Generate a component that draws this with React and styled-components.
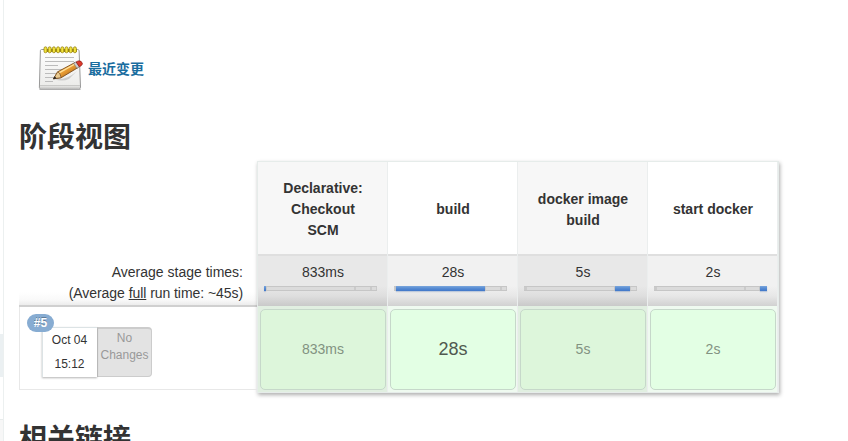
import React from 'react';
import styled, { createGlobalStyle, css } from 'styled-components';

const GlobalStyle = createGlobalStyle`
  * { box-sizing: border-box; }
  body {
    margin: 0;
    overflow: hidden;
    background: #fff;
    color: #333;
    font-family: "Liberation Sans", "Noto Sans CJK SC", sans-serif;
    font-size: 14px;
    line-height: 21px;
  }
`;

const Page = styled.div`
  display: flex;
  width: 848px;
  height: 441px;
  overflow: hidden;
`;

const Rail = styled.aside`
  display: flex;
  flex-direction: column;
  width: 4px;
  flex: none;
  border-right: 1px solid #ecf0f0;
`;

const RailSpace = styled.div`
  height: ${(p) => p.$height}px;
`;

const RailActive = styled.div`
  height: 43px;
  background: #ebf0f2;
`;

const RailFoot = styled.div`
  flex: 1;
  background: #f7f7f7;
  border-top: 1px solid #e8ecec;
`;

const Main = styled.main`
  flex: 1;
  padding: 44px 0 0 15px;
`;

const ChangesLink = styled.a`
  display: flex;
  align-items: center;
  height: 48px;
  padding-left: 17px;
  color: #1a6d9f;
  font-weight: 700;
  font-family: "Noto Sans CJK SC", sans-serif;
  svg { flex: none; margin-right: 4px; }
  span { margin-top: 1px; }
`;

const Title = styled.h2`
  margin: 0;
  padding-top: ${(p) => p.$top}px;
  font: 700 28px/40px "Noto Sans CJK SC", sans-serif;
  color: #333;
`;

const StageView = styled.section`
  display: flex;
  align-items: flex-start;
  height: 232px;
  margin-top: 6px;
`;

const Legend = styled.div`
  width: 238px;
  padding-top: 93px;
`;

const AverageLabel = styled.div`
  height: 53px;
  padding: 8px 14px 0 0;
  text-align: right;
  white-space: nowrap;
  border-bottom: 2px solid #d0d0d0;
  background: linear-gradient(#fff 75%, #f9f9f9 90%, #ececec);
`;

const FullRun = styled.div`
  letter-spacing: -0.06px;
`;

const RunInfo = styled.div`
  position: relative;
  height: 83px;
  padding: 20px 0 0 22px;
  display: flex;
  align-items: flex-start;
  border: solid #e8e8e8;
  border-width: 0 0 1px 1px;
`;

const Badge = styled.span`
  position: absolute;
  z-index: 2;
  left: 7px;
  top: 7px;
  width: 27px;
  height: 18px;
  border-radius: 9px;
  background: #87acd2;
  color: #fff;
  font-size: 12px;
  font-weight: 700;
  line-height: 18px;
  text-align: center;
  text-shadow: 0 -1px 0 rgba(0, 0, 0, 0.3);
`;

const RunDate = styled.div`
  width: 55px;
  height: 50px;
  padding-right: 1px;
  text-align: center;
  font-size: 12px;
  line-height: 24px;
  background: #fff;
  border: solid #dce3e5;
  border-width: 1px 0 0 1px;
  box-shadow: 0 1px 2px rgba(0, 0, 0, 0.3);
  z-index: 1;
`;

const NoChanges = styled.div`
  width: 55px;
  height: 50px;
  padding-top: 1px;
  text-align: center;
  font-size: 12px;
  line-height: 17px;
  color: #999;
  background: #e3e3e3;
  border: 1px solid #ccc;
  border-top-width: 2px;
  border-radius: 0 4px 4px 0;
`;

const Grid = styled.div`
  display: grid;
  grid-template-columns: repeat(4, 130px);
  width: 522px;
  height: 232px;
  border: 1px solid #e6ecea;
  box-shadow: 1px 2px 4px rgba(0, 0, 0, 0.32);
`;

const Stage = styled.div`
  background: ${(p) => (p.$odd ? '#f7f7f7' : '#fff')};
  border-right: 1px solid #ebeeee;
`;

const StageName = styled.div`
  height: 94px;
  display: flex;
  align-items: center;
  justify-content: center;
  padding: 3px 17px 0 18px;
  text-align: center;
  font-weight: 700;
  border-bottom: 2px solid #dfdfdf;
`;

const StageAverage = styled.div`
  height: 50px;
  padding: 6px 8px 0 6px;
  text-align: center;
  background: ${(p) =>
    p.$odd
      ? 'linear-gradient(#e8e8e8 60%, #dedede 80%, #c9c9c9)'
      : 'linear-gradient(#f1f1f1 60%, #e7e7e7 80%, #d1d1d1)'};
`;

const AverageText = styled.div`
  padding-left: 3px;
`;

const Bar = styled.div`
  display: flex;
  width: 113px;
  height: 5px;
  margin-top: 3px;
`;

const segmentFill = css`
  background: linear-gradient(#7ba6dc, #5b8fd4 40%, #4077c9);
  box-shadow: 0 1px 1px rgba(50, 100, 170, 0.25);
`;

const segmentTrack = css`
  background: #dbdbdb;
  border: solid #c6c6c6;
  border-width: 1px 0;
  box-shadow: inset 1px 0 #cacaca, inset -1px 0 #cacaca;
`;

const Segment = styled.i`
  height: 5px;
  width: ${(p) => p.$size}px;
  flex: none;
  ${(p) => (p.$filled ? segmentFill : segmentTrack)}
`;

const RunCell = styled.div`
  height: 86px;
  padding: 3px 1px 2px 2px;
  background: ${(p) => (p.$odd ? '#e1efe1' : '#effaf0')};
`;

const RunResult = styled.div`
  height: 81px;
  padding-bottom: 1px;
  display: flex;
  align-items: center;
  justify-content: center;
  border: 1px solid #c6d8ca;
  border-radius: 5px;
  background: ${(p) => (p.$odd ? '#ddf6db' : '#e3ffe4')};
  color: ${(p) => (p.$main ? '#50594f' : '#829281')};
  font-size: ${(p) => (p.$main ? 18 : 14)}px;
`;

const Pad = () => (
  <svg width="48" height="48" viewBox="0 0 48 48">
    <defs>
      <linearGradient id="paper" x2="0" y2="1">
        <stop stopColor="#fff" />
        <stop offset="1" stopColor="#eaeae8" />
      </linearGradient>
      <linearGradient id="wood" x2="1" y2="1">
        <stop stopColor="#ffdc83" />
        <stop offset=".5" stopColor="#e89b32" />
        <stop offset="1" stopColor="#8b4d10" />
      </linearGradient>
    </defs>
    <path d="M4 44.5h40l1 1.2H3z" fill="#ababab" />
    <path d="M5.5 5.5h36c1 0 1.5.5 1.6 1.5l1.4 36c0 1.2-.5 2-1.7 2H5c-1.2 0-1.7-.8-1.6-2l1-36c0-1 .3-1.500 1.1-1.500z" fill="url(#paper)" stroke="#999" />
    <path d="M4 41.500h40M4 43.200h40" stroke="#c9c9c7" />
    <path d="M9 13.500h29M9 17.500h29M9 21.500h13M9 25.500h22M9 29.500h16M9 33.500h9M9 37.500h8" stroke="#bcbcbc" />
    <path d="M8 5h33v3H8z" fill="#a18d12" />
    {[8, 12.2, 16.4, 20.6, 24.8, 29, 33.2, 37.4].map((x) => (
      <rect key={x} x={x} y="2.800" width="3" height="6" rx="1.500" fill="#f3e33c" stroke="#8d7808" strokeWidth=".7" />
    ))}
    <path d="M18 35q12 2 23-8l-8 8q-7 3-15 0z" fill="#999" opacity=".4" />
    <path d="M17.500 34.800l4.200-7 17.300-9.300 3.200 5-17 10.200z" fill="url(#wood)" stroke="#704315" strokeWidth=".8" />
    <path d="M23 28.800l16-8.800" stroke="#ffe19a" strokeWidth="1.400" />
    <path d="M17.500 34.800l4.200-7q2.500.5 3.500 5.900z" fill="#eacb91" stroke="#704315" strokeWidth=".7" />
    <path d="M17 35.200l1.700-3 1.800 2z" fill="#222" />
    <path d="M37.700 19.200l2.400-1.300 3.200 4.900-2.400 1.400z" fill="#cfcfcf" stroke="#777" strokeWidth=".6" />
    <path d="M40.100 17.900l2.200-1q3.200-.4 4 2.300.2 1.600-1.200 2.600l-1.800 1z" fill="#dc3a2c" stroke="#8b1712" strokeWidth=".7" />
  </svg>
);

const stages = [
  { name: 'Declarative: Checkout SCM', time: '833ms', filled: 0, bar: [2, 89, 16, 6] },
  { name: 'build', time: '28s', filled: 1, bar: [2, 89, 16, 6] },
  { name: 'docker image build', time: '5s', filled: 2, bar: [2, 89, 15, 7] },
  { name: 'start docker', time: '2s', filled: 3, bar: [2, 89, 15, 7] },
];

export default function App() {
  return (
    <Page>
      <GlobalStyle />
      <Rail>
        <RailSpace $height={334} />
        <RailActive />
        <RailSpace $height={42} />
        <RailFoot />
      </Rail>
      <Main>
        <ChangesLink>
          <Pad />
          <span>最近变更</span>
        </ChangesLink>
        <Title $top={23}>阶段视图</Title>
        <StageView>
          <Legend>
            <AverageLabel>
              <div>Average stage times:</div>
              <FullRun>
                (Average <u>full</u> run time: ~45s)
              </FullRun>
            </AverageLabel>
            <RunInfo>
              <Badge>#5</Badge>
              <RunDate>
                Oct 04
                <br />
                15:12
              </RunDate>
              <NoChanges>
                No
                <br />
                Changes
              </NoChanges>
            </RunInfo>
          </Legend>
          <Grid>
            {stages.map((s, i) => {
              const odd = i % 2 === 0;
              return (
                <Stage key={s.name} $odd={odd}>
                  <StageName>{s.name}</StageName>
                  <StageAverage $odd={odd}>
                    <AverageText>{s.time}</AverageText>
                    <Bar>
                      {s.bar.map((size, k) => (
                        <Segment key={k} $size={size} $filled={k === s.filled} />
                      ))}
                    </Bar>
                  </StageAverage>
                  <RunCell $odd={odd}>
                    <RunResult $odd={odd} $main={s.name === 'build'}>
                      {s.time}
                    </RunResult>
                  </RunCell>
                </Stage>
              );
            })}
          </Grid>
        </StageView>
        <Title $top={24}>相关链接</Title>
      </Main>
    </Page>
  );
}
